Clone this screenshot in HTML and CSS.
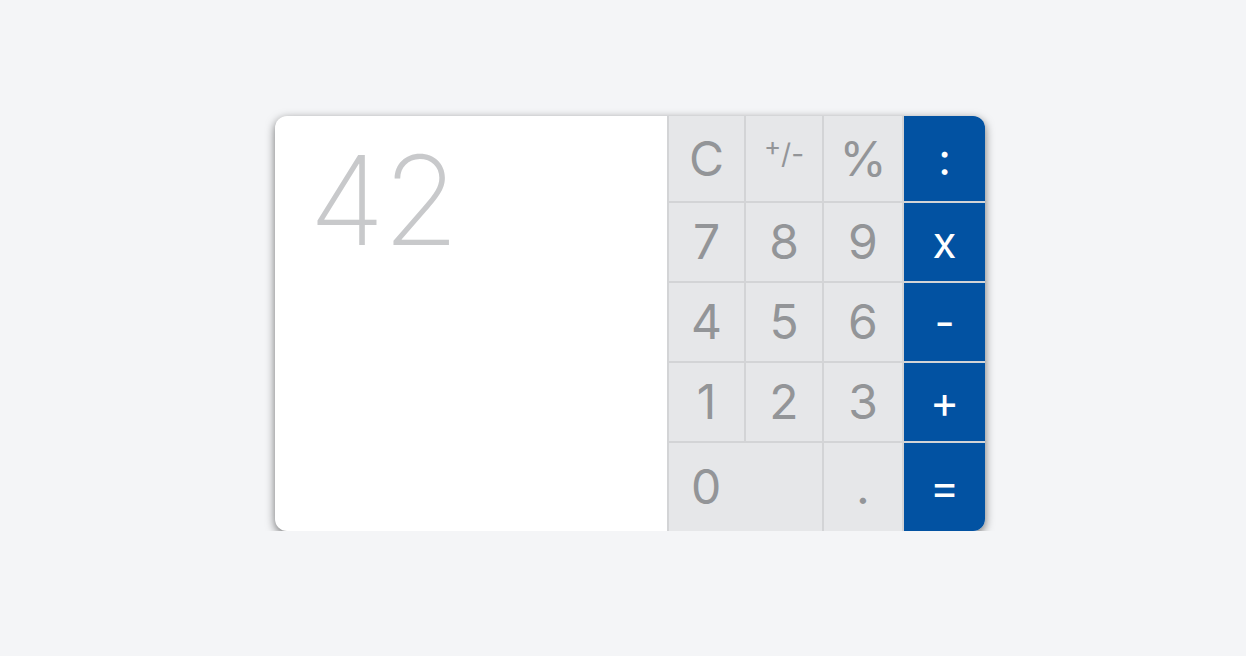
FILE: index.html
```html
<!DOCTYPE html>
<html lang="en">
<head>
    <meta charset="UTF-8">
    <meta name="viewport" content="width=device-width, initial-scale=1.0">
    <title>Calculator</title>
    <link rel="stylesheet" href="styles.css">
</head>
<body>

<div class="stage">
    <div class="calculator">
        <div class="display">42</div>

        <div class="keypad">
            <button class="key">C</button>
            <button class="key key-small"><span class="raise">+</span>/-</button>
            <button class="key">%</button>
            <button class="key op">:</button>

            <button class="key">7</button>
            <button class="key">8</button>
            <button class="key">9</button>
            <button class="key op">x</button>

            <button class="key">4</button>
            <button class="key">5</button>
            <button class="key">6</button>
            <button class="key op">-</button>

            <button class="key">1</button>
            <button class="key">2</button>
            <button class="key">3</button>
            <button class="key op">+</button>

            <button class="key zero">0</button>
            <button class="key">.</button>
            <button class="key op">=</button>
        </div>
    </div>
</div>

</body>
</html>
```

FILE: styles.css
```css
body {
    margin: 0;
    background-color: #f4f5f7;
    font-family: 'Inter', 'Lato', sans-serif;
}

.stage {
    padding: 116px 0 0 275px;
}

.calculator {
    display: flex;
    width: 710px;
    height: 415px;
    border-radius: 12px;
    overflow: hidden;
    background-color: white;
    box-shadow: 0px 3px 10px rgba(0, 0, 0, 0.55);
}

.display {
    width: 392px;
    padding: 22px 0 0 34px;
    box-sizing: border-box;
    font-size: 124px;
    font-weight: 200;
    line-height: 1;
    color: #c8c9cb;
    letter-spacing: -2px;
}

.keypad {
    flex: 1;
    display: grid;
    grid-template-columns: 75px 76px 78px 81px;
    grid-template-rows: 85px 78px 78px 78px 88px;
    gap: 2px;
    padding-left: 2px;
    background-color: #d3d4d6;
}

.key {
    border: none;
    padding: 0;
    margin: 0;
    background-color: #e6e7e9;
    color: #939598;
    font-family: inherit;
    font-size: 48px;
    font-weight: 400;
    line-height: 1;
    display: flex;
    align-items: center;
    justify-content: center;
    cursor: pointer;
}

.key-small {
    font-size: 28px;
    padding-bottom: 10px;
}

.key-small .raise {
    font-size: 26px;
    position: relative;
    top: -8px;
}

.zero {
    grid-column: span 2;
    justify-content: flex-start;
    padding-left: 22px;
}

.op {
    background-color: #0252a2;
    color: white;
    font-size: 44px;
    font-weight: 400;
}
```
